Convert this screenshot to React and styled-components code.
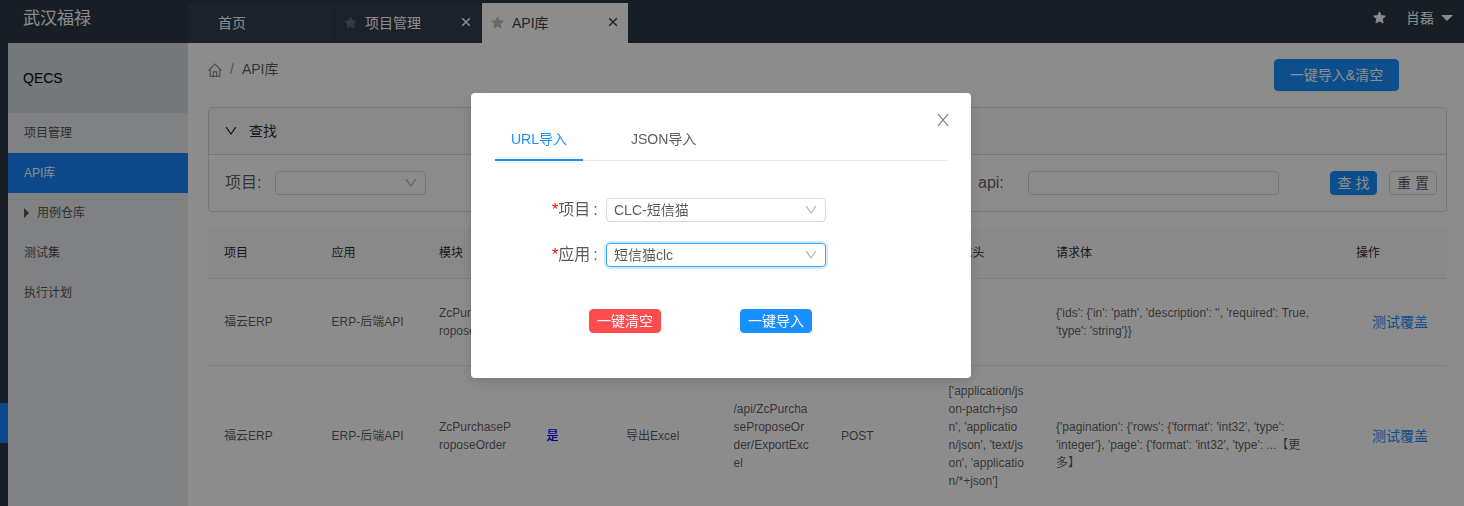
import React from 'react';
import styled, { createGlobalStyle, css } from 'styled-components';

const Global = createGlobalStyle`
  * { box-sizing: border-box; }
  body {
    margin: 0;
    overflow: hidden;
    font-family: "Liberation Sans", "Noto Sans CJK SC", sans-serif;
    font-size: 14px;
    line-height: 21px;
    color: rgba(0, 0, 0, 0.65);
    background: #fff;
  }
`;

const Page = styled.div`
  height: 506px;
  display: flex;
  flex-direction: column;
  overflow: hidden;
`;

const TopBar = styled.header`
  height: 43px;
  flex: none;
  display: flex;
  background: #2a3745;
  color: #fff;
`;

const Brand = styled.div`
  width: 188px;
  padding: 7px 0 0 23px;
  font-size: 17px;
  line-height: 24px;
`;

const TabStrip = styled.nav`
  display: flex;
  padding-top: 3px;
`;

const PageTab = styled.div`
  width: ${(p) => p.$width}px;
  height: 40px;
  padding: 0 10px 0 ${(p) => (p.$plain ? 30 : 9)}px;
  display: flex;
  align-items: center;
  border-right: ${(p) => (p.$active ? 0 : 1)}px solid #2b3644;
  background: ${(p) => (p.$active ? '#fff' : '#323e50')};
  color: ${(p) => (p.$active ? '#444' : '#fff')};
`;

const TabLabel = styled.span`
  flex: 1;
  margin-left: ${(p) => p.$gap || 0}px;
`;

const StarShape = styled.svg`
  width: 13px;
  height: 13px;
  flex: none;
  margin-bottom: 1px;
  fill: ${(p) => p.$color};
`;

const CrossShape = styled.svg`
  width: 10px;
  height: 10px;
  margin-bottom: 2px;
  fill: none;
  stroke: currentColor;
  stroke-width: 1.5;
`;

const LineIcon = styled.svg`
  flex: none;
  fill: none;
  stroke: currentColor;
  stroke-width: 1.2;
`;

const UserArea = styled.div`
  margin-left: auto;
  height: 36px;
  padding-right: 11px;
  display: flex;
  align-items: center;
`;

const UserName = styled.span`
  margin: 0 7px 0 20px;
`;

const Caret = styled.i`
  width: 0;
  height: 0;
  border: 6px solid transparent;
  ${(p) =>
    p.$right
      ? css`border-width: 5px 0 5px 5px; border-left-color: #555; margin-right: 8px;`
      : css`border-width: 6px 6px 0; border-top-color: #fff;`}
`;

const Body = styled.div`
  flex: 1;
  min-height: 0;
  display: flex;
`;

const Rail = styled.aside`
  width: 8px;
  padding-top: 360px;
  background: #2a3745;
`;

const RailMark = styled.div`
  height: 40px;
  background: #1683fb;
`;

const SideMenu = styled.aside`
  width: 180px;
  background: #eaecee;
  font-size: 12px;
`;

const SideTitle = styled.div`
  height: 70px;
  padding-left: 15px;
  display: flex;
  align-items: center;
  background: #d5dbdf;
  color: #000;
  font-size: 14px;
`;

const SideItem = styled.div`
  height: 40px;
  padding-left: 16px;
  display: flex;
  align-items: center;
  background: ${(p) => (p.$active ? '#1683fb' : 'transparent')};
  color: ${(p) => (p.$active ? '#fff' : '#555')};
`;

const Main = styled.main`
  flex: 1;
  min-width: 0;
  padding: 16px 17px 0 20px;
  display: flex;
  flex-direction: column;
  overflow: hidden;
`;

const TitleRow = styled.div`
  height: 48px;
  padding-right: 48px;
  flex: none;
  display: flex;
  align-items: flex-start;
  justify-content: space-between;
`;

const Crumbs = styled.div`
  display: flex;
  align-items: center;
  color: rgba(0, 0, 0, 0.45);
`;

const CrumbSlash = styled.span`
  margin: 0 8px;
`;

const CrumbName = styled.span`
  color: rgba(0, 0, 0, 0.65);
`;

const Button = styled.button`
  width: ${(p) => p.$width}px;
  height: ${(p) => (p.$large ? 32 : 24)}px;
  padding: 0;
  border: 1px solid ${(p) => p.$line || p.$fill};
  border-radius: 4px;
  background: ${(p) => p.$fill};
  color: ${(p) => p.$ink || '#fff'};
  font: inherit;
  line-height: 20px;
  white-space: nowrap;
  box-shadow: 0 2px 0 rgba(0, 0, 0, ${(p) => (p.$flat ? 0 : 0.04)});
`;

const Panel = styled.section`
  height: 105px;
  flex: none;
  border: 1px solid #d9d9d9;
  border-radius: 4px;
  overflow: hidden;
`;

const PanelHead = styled.div`
  height: 47px;
  padding-left: 16px;
  display: flex;
  align-items: center;
  gap: 12px;
  border-bottom: 1px solid #d9d9d9;
  background: #fafafa;
  color: rgba(0, 0, 0, 0.85);
`;

const SearchRow = styled.div`
  height: 56px;
  padding: 0 9px 0 16px;
  display: flex;
  align-items: center;
  font-size: 16px;
`;

const SearchLabel = styled.label`
  width: 50px;
  padding-bottom: 1px;
`;

const SearchActions = styled.div`
  margin-left: auto;
  display: flex;
  gap: 12px;
  font-size: 14px;
`;

const Field = styled.div`
  width: ${(p) => p.$width}px;
  height: 24px;
  padding: 0 8px 0 7px;
  display: flex;
  align-items: center;
  justify-content: space-between;
  border: 1px solid ${(p) => (p.$focused ? '#40a9ff' : '#d9d9d9')};
  border-radius: 4px;
  background: #fff;
  font-size: 14px;
  box-shadow: ${(p) => (p.$focused ? '0 0 0 2px rgba(24, 144, 255, 0.2)' : 'none')};
`;

const FieldArrow = styled.span`
  margin-left: auto;
  display: flex;
  color: rgba(0, 0, 0, 0.3);
`;

const ApiField = styled.div`
  margin-left: 552px;
  display: flex;
  align-items: center;
`;

const Table = styled.div`
  margin-top: 16px;
  font-size: 12px;
  line-height: 18px;
`;

const Row = styled.div`
  height: ${(p) => p.$height}px;
  display: grid;
  grid-template-columns: 107.5px 107.5px 107.5px 79.5px 107.5px 107.5px 107.5px 107.5px 300px 1fr;
  align-items: center;
  border-bottom: 1px solid #e8e8e8;
  ${(p) =>
    p.$head &&
    css`
      padding-bottom: 1px;
      background: #fafafa;
      color: rgba(0, 0, 0, 0.85);
      border-radius: 4px 4px 0 0;
    `}
`;

const Cell = styled.div`
  padding: 0 16px;
  white-space: pre-line;
`;

const YesLink = styled.a`
  color: #0000ff;
  font-weight: 500;
`;

const CoverLink = styled.a`
  margin-left: 16px;
  color: #1890ff;
  font-size: 14px;
  white-space: nowrap;
`;

const Overlay = styled.div`
  position: fixed;
  inset: 0;
  padding: 93px 22px 0 0;
  display: flex;
  justify-content: center;
  align-items: flex-start;
  background: rgba(0, 0, 0, 0.45);
`;

const Dialog = styled.div`
  position: relative;
  width: 500px;
  height: 285px;
  padding: 24px;
  border-radius: 4px;
  background: #fff;
  box-shadow: 0 4px 12px rgba(0, 0, 0, 0.15);
`;

const DialogClose = styled.span`
  position: absolute;
  top: 20px;
  right: 22px;
  display: flex;
  color: rgba(0, 0, 0, 0.5);
`;

const DialogTabs = styled.div`
  height: 44px;
  display: flex;
  gap: 32px;
  border-bottom: 1px solid #e8e8e8;
`;

const DialogTab = styled.div`
  height: 44px;
  padding: 12px 16px 0;
  border-bottom: 2px solid ${(p) => (p.$active ? '#1890ff' : 'transparent')};
  color: ${(p) => (p.$active ? '#1890ff' : 'inherit')};
`;

const Form = styled.div`
  padding: 37px 0 0 57px;
  display: flex;
  flex-direction: column;
  gap: 21px;
`;

const FormRow = styled.div`
  height: 24px;
  display: flex;
  align-items: center;
  font-size: 16px;
`;

const FormLabel = styled.label`
  width: 54px;
  padding-bottom: 2px;
`;

const Required = styled.span`
  color: #ff0000;
`;

const Colon = styled.span`
  margin-left: 3px;
`;

const DialogActions = styled.div`
  padding: 42px 0 0 94px;
  display: flex;
  gap: 79px;
`;

const Star = ({ color }) => (
  <StarShape $color={color} viewBox="0 0 24 24">
    <path
      d="M12 1.5l3.3 6.9 7.5 1-5.5 5.2 1.4 7.6L12 18.6l-6.7 3.6 1.4-7.6L1.2 9.4l7.5-1z"
      stroke={color}
      strokeWidth="1.5"
      strokeLinejoin="round"
    />
  </StarShape>
);

const Cross = () => (
  <CrossShape viewBox="0 0 10 10">
    <path d="M1.2 1.2l7.6 7.6M8.8 1.2L1.2 8.8" />
  </CrossShape>
);

const Chevron = () => (
  <LineIcon width="12" height="12" viewBox="0 0 12 12">
    <path d="M1.2 2.2L6 9l4.8-6.8" />
  </LineIcon>
);

const Home = () => (
  <LineIcon width="14" height="14" viewBox="0 0 14 14">
    <path d="M.4 7.6L7 1l6.6 6.6M2.2 6.6v6.7h9.6V6.6M5.3 13V8.8h3.4V13" />
  </LineIcon>
);

const rows = [
  {
    height: 87,
    cells: ['福云ERP', 'ERP-后端API', 'ZcPurchaseP\nroposeOrder', '', '', '', '', '',
      "{'ids': {'in': 'path', 'description': '', 'required': True,\n'type': 'string'}}"],
  },
  {
    height: 141,
    cells: ['福云ERP', 'ERP-后端API', 'ZcPurchaseP\nroposeOrder', <YesLink key="y">是</YesLink>, '导出Excel',
      '/api/ZcPurcha\nseProposeOr\nder/ExportExc\nel', 'POST',
      "['application/js\non-patch+jso\nn', 'applicatio\nn/json', 'text/js\non', 'applicatio\nn/*+json']",
      "\n{'pagination': {'rows': {'format': 'int32', 'type':\n'integer'}, 'page': {'format': 'int32', 'type': ...【更\n多】"],
  },
];

const heads = ['项目', '应用', '模块', '', '', '', '', '请求头', '请求体', '操作'];

export default function App() {
  return (
    <>
      <Global />
      <Page>
        <TopBar>
          <Brand>武汉福禄</Brand>
          <TabStrip>
            <PageTab $width={147} $plain><TabLabel>首页</TabLabel></PageTab>
            <PageTab $width={147}>
              <Star color="#5f6a78" /><TabLabel $gap={8}>项目管理</TabLabel><Cross />
            </PageTab>
            <PageTab $width={146} $active>
              <Star color="#bfbfbf" /><TabLabel $gap={8}>API库</TabLabel><Cross />
            </PageTab>
          </TabStrip>
          <UserArea>
            <Star color="#fff" />
            <UserName>肖磊</UserName>
            <Caret />
          </UserArea>
        </TopBar>
        <Body>
          <Rail><RailMark /></Rail>
          <SideMenu>
            <SideTitle>QECS</SideTitle>
            <SideItem>项目管理</SideItem>
            <SideItem $active>API库</SideItem>
            <SideItem><Caret $right />用例仓库</SideItem>
            <SideItem>测试集</SideItem>
            <SideItem>执行计划</SideItem>
          </SideMenu>
          <Main>
            <TitleRow>
              <Crumbs>
                <Home />
                <CrumbSlash>/</CrumbSlash>
                <CrumbName>API库</CrumbName>
              </Crumbs>
              <Button $width={125} $large $fill="#1890ff">一键导入&amp;清空</Button>
            </TitleRow>
            <Panel>
              <PanelHead><Chevron />查找</PanelHead>
              <SearchRow>
                <SearchLabel>项目:</SearchLabel>
                <Field $width={151}><FieldArrow><Chevron /></FieldArrow></Field>
                <ApiField>
                  <SearchLabel>api:</SearchLabel>
                  <Field $width={251} />
                </ApiField>
                <SearchActions>
                  <Button $width={47} $fill="#1890ff">查 找</Button>
                  <Button $width={48} $fill="#fff" $line="#d9d9d9" $ink="rgba(0,0,0,.65)" $flat>重 置</Button>
                </SearchActions>
              </SearchRow>
            </Panel>
            <Table>
              <Row $height={51} $head>
                {heads.map((text, i) => <Cell key={i}>{text}</Cell>)}
              </Row>
              {rows.map((row, r) => (
                <Row key={r} $height={row.height}>
                  {row.cells.map((cell, i) => <Cell key={i}>{cell}</Cell>)}
                  <Cell><CoverLink>测试覆盖</CoverLink></Cell>
                </Row>
              ))}
            </Table>
          </Main>
        </Body>
      </Page>
      <Overlay>
        <Dialog>
          <DialogClose>
            <LineIcon width="12" height="14" viewBox="0 0 12 14">
              <path d="M.8.9l10.4 12.2M11.2.9L.8 13.1" />
            </LineIcon>
          </DialogClose>
          <DialogTabs>
            <DialogTab $active>URL导入</DialogTab>
            <DialogTab>JSON导入</DialogTab>
          </DialogTabs>
          <Form>
            <FormRow>
              <FormLabel><Required>*</Required>项目<Colon>:</Colon></FormLabel>
              <Field $width={220}>CLC-短信猫<FieldArrow><Chevron /></FieldArrow></Field>
            </FormRow>
            <FormRow>
              <FormLabel><Required>*</Required>应用<Colon>:</Colon></FormLabel>
              <Field $width={220} $focused>短信猫clc<FieldArrow><Chevron /></FieldArrow></Field>
            </FormRow>
          </Form>
          <DialogActions>
            <Button $width={72} $fill="#ff4d4f" $flat>一键清空</Button>
            <Button $width={72} $fill="#1890ff" $flat>一键导入</Button>
          </DialogActions>
        </Dialog>
      </Overlay>
    </>
  );
}
